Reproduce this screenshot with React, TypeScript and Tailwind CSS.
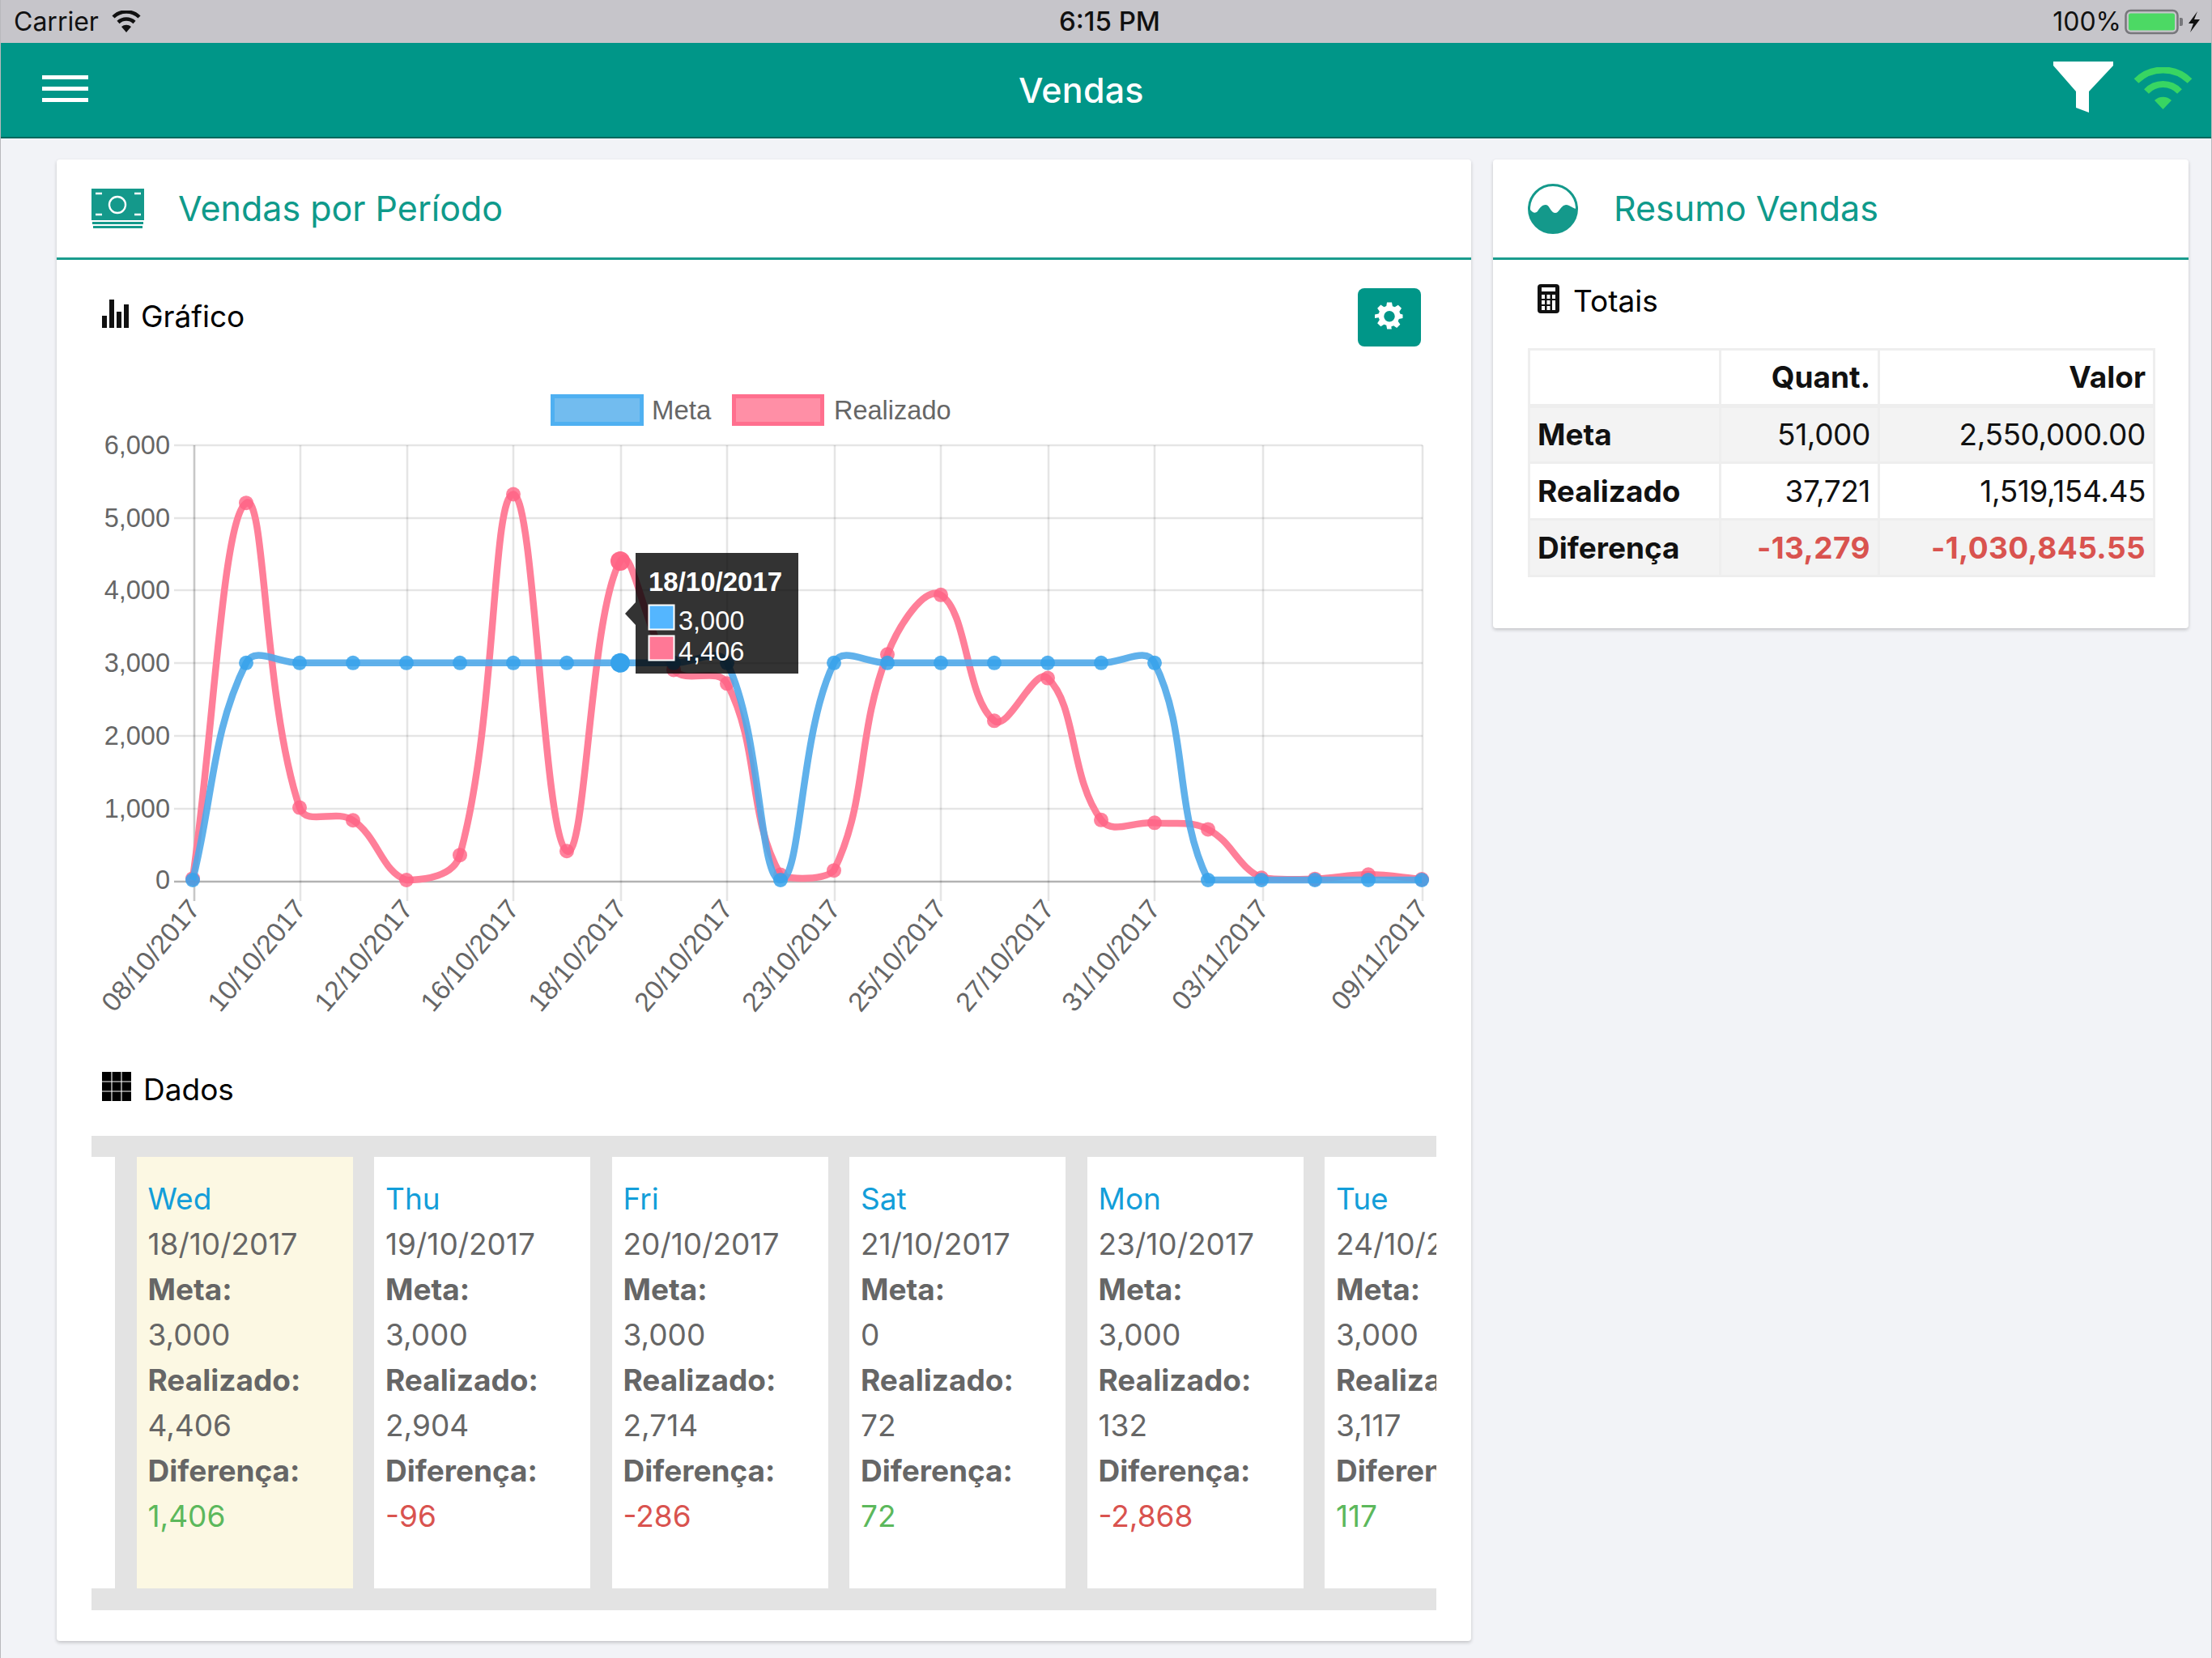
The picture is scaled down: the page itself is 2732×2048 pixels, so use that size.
import React from "react";

const real = [20, 5210, 1000, 825, 0, 345, 5330, 400, 4406, 2904, 2714, 72, 132, 3117, 3940, 2200, 2790, 830, 790, 700, 30, 15, 75, 10];
const meta = [0, 3000, 3000, 3000, 3000, 3000, 3000, 3000, 3000, 3000, 3000, 0, 3000, 3000, 3000, 3000, 3000, 3000, 3000, 0, 0, 0, 0, 0];
const px = (i: number) => 238 + 66 * i;
const py = (v: number) => 1087 - v * 0.0894;
const BOTTOM = py(0);

function spline(vals: number[]): string {
  const pts = vals.map((v, i) => ({ x: px(i), y: py(v) }));
  const t = 0.4;
  const ctrl = pts.map((p, i) => {
    const a = pts[Math.max(0, i - 1)];
    const b = pts[Math.min(pts.length - 1, i + 1)];
    const d01 = Math.hypot(p.x - a.x, p.y - a.y);
    const d12 = Math.hypot(b.x - p.x, b.y - p.y);
    const s01 = d01 + d12 === 0 ? 0 : d01 / (d01 + d12);
    const s12 = d01 + d12 === 0 ? 0 : d12 / (d01 + d12);
    return {
      px: p.x - t * s01 * (b.x - a.x),
      py: Math.min(BOTTOM, p.y - t * s01 * (b.y - a.y)),
      nx: p.x + t * s12 * (b.x - a.x),
      ny: Math.min(BOTTOM, p.y + t * s12 * (b.y - a.y)),
    };
  });
  let d = `M${pts[0].x} ${pts[0].y}`;
  for (let i = 1; i < pts.length; i++) {
    d += ` C${ctrl[i - 1].nx} ${ctrl[i - 1].ny} ${ctrl[i].px} ${ctrl[i].py} ${pts[i].x} ${pts[i].y}`;
  }
  return d;
}

const yTicks: [string, number][] = [
  ["6,000", 550],
  ["5,000", 640],
  ["4,000", 729],
  ["3,000", 819],
  ["2,000", 909],
  ["1,000", 999],
];
const xTicks: [string, number][] = [
  ["08/10/2017", 240],
  ["10/10/2017", 371],
  ["12/10/2017", 503],
  ["16/10/2017", 634],
  ["18/10/2017", 767],
  ["20/10/2017", 898],
  ["23/10/2017", 1031],
  ["25/10/2017", 1162],
  ["27/10/2017", 1295],
  ["31/10/2017", 1426],
  ["03/11/2017", 1560],
  ["09/11/2017", 1757],
];

function Chart() {
  return (
    <svg viewBox="113 470 1661 810" className="block w-[1661px] h-[810px] mt-[42px]" fontFamily="'Liberation Sans', Arial, sans-serif">
      <rect x="682.5" y="489.5" width="110" height="34" fill="#72bcef" stroke="#4fb0f1" strokeWidth="5" />
      <text x="805" y="518" fontSize="33" fill="#666">Meta</text>
      <rect x="906.5" y="489.5" width="109" height="34" fill="#ff8fa6" stroke="#ff6f8e" strokeWidth="5" />
      <text x="1030" y="518" fontSize="32.5" fill="#666">Realizado</text>

      {yTicks.map(([l, y]) => (
        <g key={l}>
          <line x1="215" x2="1757" y1={y} y2={y} stroke="#000" strokeOpacity="0.1" strokeWidth="2.6" />
          <text x="210" y={y + 11} fontSize="32.5" fill="#666" textAnchor="end">{l}</text>
        </g>
      ))}
      <line x1="215" x2="1757" y1="1089" y2="1089" stroke="#000" strokeOpacity="0.3" strokeWidth="2.6" />
      <text x="210" y="1098" fontSize="32.5" fill="#666" textAnchor="end">0</text>

      {xTicks.map(([l, x]) => (
        <g key={l}>
          <line x1={x} x2={x} y1="550" y2="1113" stroke="#000" strokeOpacity={x === 240 ? 0.22 : 0.1} strokeWidth="2.6" />
          <text x={x} y="1116" fontSize="33.5" fill="#666" textAnchor="end" transform={`rotate(-50 ${x} 1116)`} dominantBaseline="central">{l}</text>
        </g>
      ))}

      <path d={spline(real)} fill="none" stroke="#ff7f99" strokeWidth="8.5" />
      {real.map((v, i) => (
        <circle key={i} cx={px(i)} cy={py(v)} r={i === 8 ? 12 : 9} fill="#ff6384" fillOpacity={i === 8 ? 0.95 : 0.8} />
      ))}
      <path d={spline(meta)} fill="none" stroke="#4fa9e9" strokeOpacity="0.9" strokeWidth="8.5" />
      {meta.map((v, i) => (
        <circle key={i} cx={px(i)} cy={py(v)} r={i === 8 ? 12 : 9} fill="#36a2eb" fillOpacity={i === 8 ? 1 : 0.85} />
      ))}

      <polygon points="772,758 785,744 785,772" fill="#000" fillOpacity="0.8" />
      <rect x="785" y="683" width="201" height="149" fill="#000" fillOpacity="0.8" />
      <text x="801" y="730" fontSize="33" fontWeight="700" fill="#fff">18/10/2017</text>
      <rect x="801.5" y="747.5" width="31" height="30" fill="#54b6ff" stroke="#fff" strokeWidth="2" />
      <rect x="801.5" y="785.5" width="31" height="30" fill="#ff7896" stroke="#fff" strokeWidth="2" />
      <text x="838" y="778" fontSize="32.5" fill="#fff">3,000</text>
      <text x="838" y="816" fontSize="32.5" fill="#fff">4,406</text>
    </svg>
  );
}

type Day = { d: string; date: string; m: string; r: string; diff: string; pos: boolean; hl?: boolean };
const days: Day[] = [
  { d: "Wed", date: "18/10/2017", m: "3,000", r: "4,406", diff: "1,406", pos: true, hl: true },
  { d: "Thu", date: "19/10/2017", m: "3,000", r: "2,904", diff: "-96", pos: false },
  { d: "Fri", date: "20/10/2017", m: "3,000", r: "2,714", diff: "-286", pos: false },
  { d: "Sat", date: "21/10/2017", m: "0", r: "72", diff: "72", pos: true },
  { d: "Mon", date: "23/10/2017", m: "3,000", r: "132", diff: "-2,868", pos: false },
  { d: "Tue", date: "24/10/2017", m: "3,000", r: "3,117", diff: "117", pos: true },
];

function DayCard({ day }: { day: Day }) {
  return (
    <div className={`shrink-0 w-[267px] h-[533px] pt-[24px] pl-[14px] whitespace-nowrap overflow-hidden text-[37px] leading-[56px] text-[#666] ${day.hl ? "bg-[#fcf8e3]" : "bg-white"}`}>
      <div className="text-[#139ed9]">{day.d}</div>
      <div>{day.date}</div>
      <div className="font-bold">Meta:</div>
      <div>{day.m}</div>
      <div className="font-bold">Realizado:</div>
      <div>{day.r}</div>
      <div className="font-bold">Diferença:</div>
      <div className={day.pos ? "text-[#5cb85c]" : "text-[#d9534f]"}>{day.diff}</div>
    </div>
  );
}

function CardHeader({ title, icon }: { title: string; icon: React.ReactNode }) {
  return (
    <div className="h-[124px] flex items-center border-b-[3px] border-[#1a9c8e]">
      {icon}
      <span className="text-[#0f9a8b] text-[43px]">{title}</span>
    </div>
  );
}

const tdBase = "border-[3px] border-[#eeeeee] px-[9px]";

export default function App() {
  return (
    <div className="w-[2732px] h-[2048px] overflow-hidden bg-[#f2f3f7] font-['Inter',sans-serif] flex flex-col border-x border-[#b9b9bd]">
      <div className="h-[53px] shrink-0 bg-[#c6c5ca] flex items-center justify-between text-[#111] text-[32px] pl-[16px] pr-[13px] relative">
        <div className="flex items-center gap-[15px]">
          <span>Carrier</span>
          <svg width="38" height="28" viewBox="0 0 38 28">
            <path d="M19 27 L13 20 A9 9 0 0 1 25 20 Z" fill="#111" />
            <path d="M9 14.5 A14.5 14.5 0 0 1 29 14.5" fill="none" stroke="#111" strokeWidth="4.5" />
            <path d="M3 8 A23 23 0 0 1 35 8" fill="none" stroke="#111" strokeWidth="4.5" />
          </svg>
        </div>
        <span className="absolute left-[1307px] font-medium text-[33px]">6:15 PM</span>
        <div className="flex items-center gap-[4px]">
          <span>100%</span>
          <svg width="94" height="32" viewBox="0 0 94 32">
            <rect x="1.5" y="2" width="64" height="28" rx="6" fill="none" stroke="#77777b" strokeWidth="2.5" />
            <rect x="5" y="5.5" width="57" height="21" rx="2.5" fill="#4cd964" />
            <path d="M68 11 h2 a2 2 0 0 1 2 2 v6 a2 2 0 0 1 -2 2 h-2 Z" fill="#77777b" />
            <path d="M90 3 L79 18 H85 L81 29 L93 13 H86 Z" fill="#111" />
          </svg>
        </div>
      </div>

      <div className="h-[118px] shrink-0 bg-[#009688] border-b-[2px] border-[#00685e] flex items-center justify-between pl-[51px] pr-[23px] relative">
        <div className="w-[57px] flex flex-col gap-[9px] -mt-[4px]">
          <div className="h-[5px] bg-white" />
          <div className="h-[5px] bg-white" />
          <div className="h-[5px] bg-white" />
        </div>
        <span className="absolute left-[1257px] top-[32px] text-white text-[43px] font-medium leading-[52px] tracking-[0.2px]">Vendas</span>
        <div className="flex items-start gap-[25px] -mt-[6px]">
          <svg width="74" height="63" viewBox="0 0 74 63" className="mt-[-2px]">
            <polygon points="0,0 74,0 74,5 44,37 44,63 28,57 28,37 0,5" fill="#fff" />
          </svg>
          <svg width="73" height="52" viewBox="0 0 73 52" className="mt-[5px]">
            <path d="M36.5 52 L26 41 A15 15 0 0 1 47 41 Z" fill="#38d562" />
            <path d="M16 30 A28 28 0 0 1 57 30" fill="none" stroke="#38d562" strokeWidth="8" />
            <path d="M3.5 17 A47 47 0 0 1 69.5 17" fill="none" stroke="#38d562" strokeWidth="8" />
          </svg>
        </div>
      </div>

      <div className="flex items-start gap-[27px] pl-[69px] pt-[26px]">
        <div className="w-[1747px] h-[1830px] bg-white rounded-[4px] shadow-[0_2px_4px_rgba(0,0,0,0.2)]">
          <CardHeader
            title="Vendas por Período"
            icon={
              <svg width="65" height="49" viewBox="0 0 65 49" className="ml-[43px] mr-[42px]">
                <rect x="0" y="0" width="65" height="39" fill="#14998b" />
                <circle cx="32" cy="20" r="10" fill="none" stroke="#fff" strokeWidth="2.4" />
                <path d="M5 6h8M53 6h8M5 32h8M53 32h8" stroke="#fff" strokeWidth="2.6" />
                <rect x="1" y="41" width="63" height="3" fill="#14998b" />
                <rect x="2" y="46" width="61" height="3" fill="#14998b" />
              </svg>
            }
          />
          <div className="px-[43px]">
            <div className="mt-[35px] h-[72px] flex items-center justify-between pr-[19px]">
              <div className="flex items-center pl-[13px] gap-[14px] text-black text-[37px]">
                <svg width="34" height="36" viewBox="0 0 34 36" className="-mt-[8px]">
                  <path d="M0 20h6v15H0zM9 0h6v35H9zM18 15h6v20h-6zM27 6h6v29h-6z" fill="#111" />
                </svg>
                <span className="-mt-[2px]">Gráfico</span>
              </div>
              <div className="w-[78px] h-[72px] bg-[#009688] rounded-[8px] flex items-center justify-center">
                <svg width="36" height="38" viewBox="0 0 24 24" className="-mt-[4px] -ml-[1px]">
                  <path fillRule="evenodd" d="M10 1h4l.6 3.1 1.9.8 2.7-1.8 2.8 2.8-1.8 2.7.8 1.9L23 11v3l-3.1.6-.8 1.9 1.8 2.7-2.8 2.8-2.7-1.8-1.9.8L13.9 23h-3.8l-.6-3.1-1.9-.8-2.7 1.8-2.8-2.8 1.8-2.7-.8-1.9L0 14v-3l3.1-.6.8-1.9-1.8-2.7 2.8-2.8 2.7 1.8 1.9-.8zM12 8a4.5 4.5 0 1 0 0 9 4.5 4.5 0 0 0 0-9z" fill="#fff" />
                </svg>
              </div>
            </div>
            <Chart />
            <div className="mt-[44px] h-[36px] flex items-center pl-[13px] gap-[15px] text-black text-[37px]">
              <svg width="36" height="36" viewBox="0 0 36 36">
                <rect width="36" height="36" fill="#000" />
                <path d="M12 0v36M24 0v36M0 12h36M0 24h36" stroke="#fff" strokeWidth="1.1" />
              </svg>
              <span className="mt-[8px]">Dados</span>
            </div>
            <div className="mt-[43px] bg-[#e3e3e3] pt-[26px] pb-[27px] flex gap-[26.5px] overflow-hidden">
              <div className="shrink-0 w-[29px] h-[533px] bg-white" />
              {days.map((d, i) => (
                <DayCard key={i} day={d} />
              ))}
            </div>
          </div>
        </div>

        <div className="w-[859px] h-[579px] bg-white rounded-[4px] shadow-[0_2px_4px_rgba(0,0,0,0.2)]">
          <CardHeader
            title="Resumo Vendas"
            icon={
              <svg width="62" height="62" viewBox="0 0 62 62" className="ml-[43px] mr-[44px]">
                <circle cx="31" cy="31" r="29.5" fill="#fff" stroke="#14998b" strokeWidth="3" />
                <path d="M2 31 C6 36 9 37 12 34 C15 29 18 26 22 26 C27 26 28 36 34 36 C39 36 40 27 47 26 C52 26 56 31 60 31 A29 29 0 0 1 2 31 Z" fill="#14998b" />
              </svg>
            }
          />
          <div className="px-[43px]">
            <div className="mt-[30px] flex items-center pl-[12px] gap-[17px] text-black text-[37px] h-[36px]">
              <svg width="27" height="36" viewBox="0 0 27 36">
                <rect x="0" y="0" width="27" height="36" rx="4" fill="#111" />
                <path d="M5 4h17v5H5z" fill="#fff" />
                <path d="M5 13h4v5H5zM11.5 13h4v5h-4zM18 13h4v5h-4zM5 20h4v5H5zM11.5 20h4v5h-4zM18 20h4v12h-4zM5 27h4v5H5zM11.5 27h4v5h-4z" fill="#fff" />
              </svg>
              <span className="mt-[5px]">Totais</span>
            </div>
            <table className="mt-[43px] w-[772px] table-fixed border-collapse text-[37px] leading-[56px] text-[#111] tracking-[-0.4px]">
              <colgroup>
                <col className="w-[236px]" />
                <col className="w-[196px]" />
                <col className="w-[340px]" />
              </colgroup>
              <thead>
                <tr className="h-[70px] font-bold tracking-normal">
                  <th className={tdBase} />
                  <th className={`${tdBase} text-right`}>Quant.</th>
                  <th className={`${tdBase} text-right`}>Valor</th>
                </tr>
              </thead>
              <tbody>
                <tr className="h-[70px] bg-[#f3f3f3]">
                  <td className={`${tdBase} border-t-[5px] font-bold tracking-normal`}>Meta</td>
                  <td className={`${tdBase} border-t-[5px] text-right`}>51,000</td>
                  <td className={`${tdBase} border-t-[5px] text-right`}>2,550,000.00</td>
                </tr>
                <tr className="h-[70px]">
                  <td className={`${tdBase} font-bold tracking-normal`}>Realizado</td>
                  <td className={`${tdBase} text-right`}>37,721</td>
                  <td className={`${tdBase} text-right`}>1,519,154.45</td>
                </tr>
                <tr className="h-[70px] bg-[#f3f3f3]">
                  <td className={`${tdBase} font-bold tracking-normal`}>Diferença</td>
                  <td className={`${tdBase} text-right font-bold tracking-[0.4px] text-[#d9534f]`}>-13,279</td>
                  <td className={`${tdBase} text-right font-bold tracking-[0.4px] text-[#d9534f]`}>-1,030,845.55</td>
                </tr>
              </tbody>
            </table>
          </div>
        </div>
      </div>
    </div>
  );
}
